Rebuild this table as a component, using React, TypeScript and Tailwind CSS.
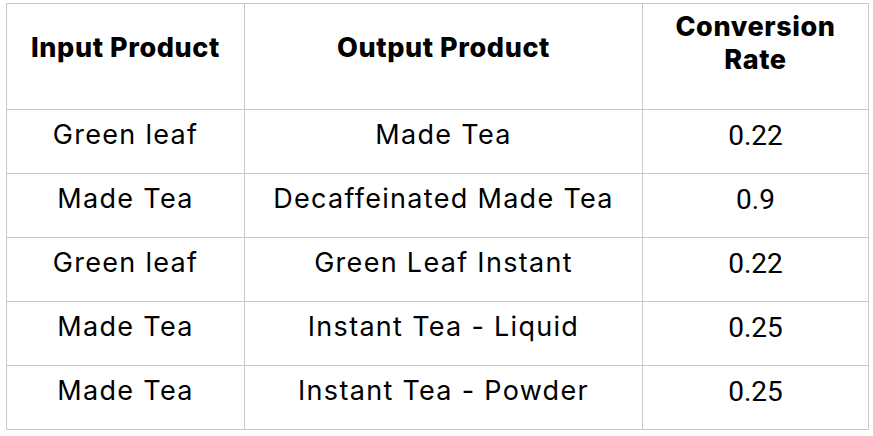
const rows = [
  ["Green leaf", "Made Tea", "0.22"],
  ["Made Tea", "Decaffeinated Made Tea", "0.9"],
  ["Green leaf", "Green Leaf Instant", "0.22"],
  ["Made Tea", "Instant Tea - Liquid", "0.25"],
  ["Made Tea", "Instant Tea - Powder", "0.25"],
];

export default function App() {
  return (
    <div className="w-[873px] h-[436px] bg-white pl-[6px] pt-[3px]">
      <table className="border-collapse table-fixed w-[862px] text-black font-['Inter',sans-serif]">
        <colgroup>
          <col className="w-[238px]" />
          <col className="w-[398px]" />
          <col className="w-[226px]" />
        </colgroup>
        <thead>
          <tr className="h-[106px]">
            <th className="border border-[#c8c8c8] text-[27px] font-extrabold tracking-[0.6px] leading-[33px] pb-[18px] px-2">Input Product</th>
            <th className="border border-[#c8c8c8] text-[27px] font-extrabold tracking-[0.6px] leading-[33px] pb-[18px] px-2">Output Product</th>
            <th className="border border-[#c8c8c8] text-[27px] font-extrabold tracking-[0.6px] leading-[33px] pb-[28px] px-2">Conversion Rate</th>
          </tr>
        </thead>
        <tbody>
          {rows.map((r, i) => (
            <tr key={i} className="h-[64px]">
              <td className="border border-[#c8c8c8] text-center text-[27px] tracking-[1.3px] pb-[12px]">{r[0]}</td>
              <td className="border border-[#c8c8c8] text-center text-[27px] tracking-[1.3px] pb-[12px]">{r[1]}</td>
              <td className="border border-[#c8c8c8] text-center text-[28px] pb-[12px] font-['Roboto',sans-serif]">{r[2]}</td>
            </tr>
          ))}
        </tbody>
      </table>
    </div>
  );
}
